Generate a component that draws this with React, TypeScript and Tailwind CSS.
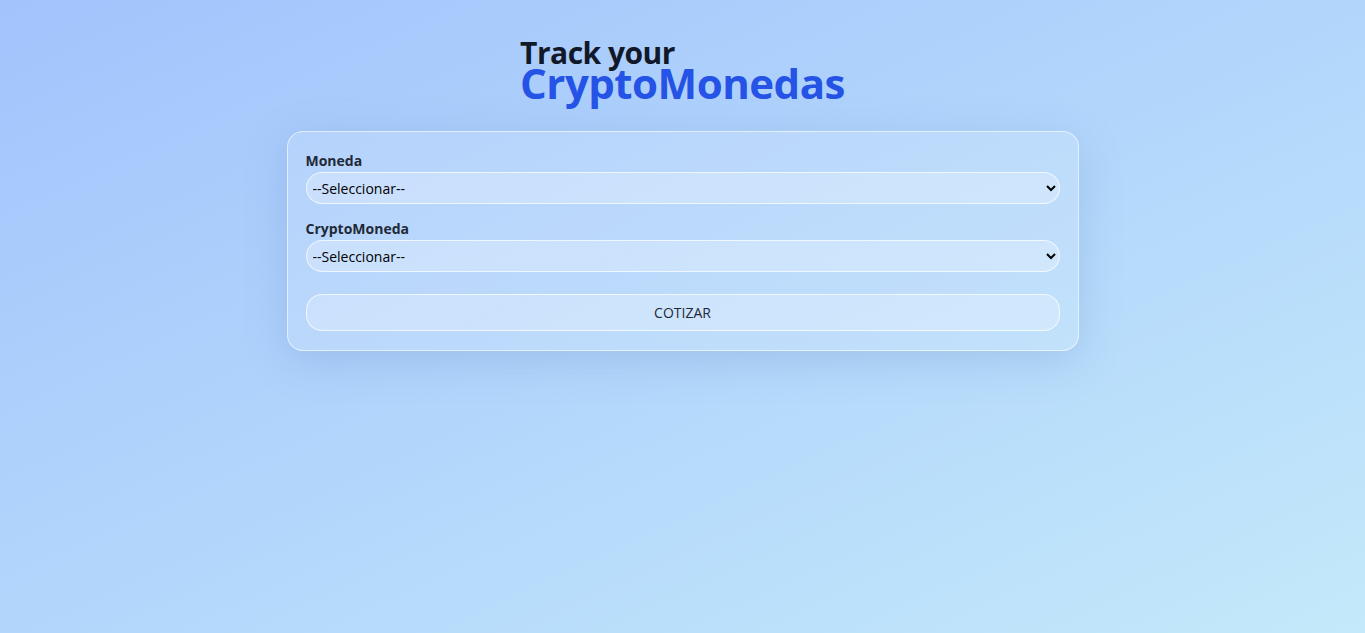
export default function App() {
  return (
    <div
      className="min-h-screen w-full bg-gradient-to-br from-[#a2c3fc] to-[#c3e9fa] pt-[45px]"
      style={{ fontFamily: '"Open Sans", "Noto Sans", sans-serif' }}
    >
      <div className="flex justify-center">
        <h1 className="font-bold tracking-[-0.5px]">
          <span className="block text-[30px] leading-[16px] text-[#111827]">Track your</span>
          <span className="block text-[42px] leading-[44px] text-[#2553e6]">CryptoMonedas</span>
        </h1>
      </div>

      <div className="mx-auto mt-[26px] w-[792px] rounded-2xl border border-white/60 bg-white/15 px-[18px] pt-[20px] pb-[19px] shadow-[0_10px_40px_rgba(90,130,190,0.25)]">
        <form className="flex flex-col">
          <label className="text-[14px] leading-[18px] font-bold text-[#1f2937]">Moneda</label>
          <select className="mt-[2px] h-[32px] w-full rounded-2xl border border-white/70 bg-white/25 px-[2px] text-[14px] text-black outline-none">
            <option>--Seleccionar--</option>
          </select>

          <label className="mt-[16px] text-[14px] leading-[18px] font-bold text-[#1f2937]">CryptoMoneda</label>
          <select className="mt-[2px] h-[32px] w-full rounded-2xl border border-white/70 bg-white/25 px-[2px] text-[14px] text-black outline-none">
            <option>--Seleccionar--</option>
          </select>

          <button
            type="button"
            className="mt-[22px] h-[37px] w-full rounded-2xl border border-white/70 bg-white/25 text-[14px] text-[#1f2937]"
          >
            COTIZAR
          </button>
        </form>
      </div>
    </div>
  );
}
